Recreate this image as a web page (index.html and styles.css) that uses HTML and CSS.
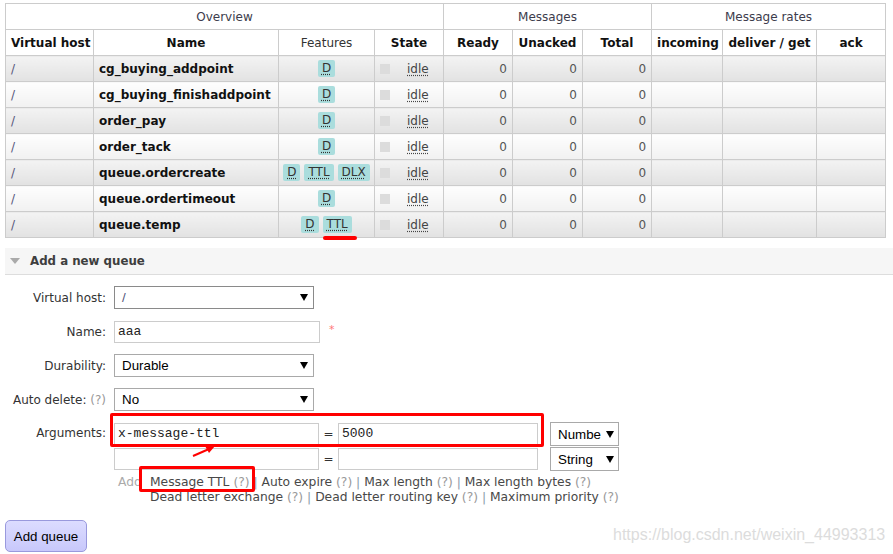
FILE: index.html
```html
<!DOCTYPE html>
<html>
<head>
<meta charset="utf-8">
<link rel="stylesheet" href="styles.css">
</head>
<body>
<div class="page">
  <table class="queues">
    <colgroup>
      <col class="c-vhost"><col class="c-name"><col class="c-feat"><col class="c-state">
      <col class="c-ready"><col class="c-unack"><col class="c-total">
      <col class="c-inc"><col class="c-del"><col class="c-ack">
    </colgroup>
    <thead>
      <tr class="group">
        <th colspan="4">Overview</th>
        <th colspan="3">Messages</th>
        <th colspan="3">Message rates</th>
      </tr>
      <tr class="cols">
        <th>Virtual host</th><th>Name</th><th class="light">Features</th><th>State</th>
        <th>Ready</th><th>Unacked</th><th>Total</th>
        <th>incoming</th><th>deliver / get</th><th>ack</th>
      </tr>
    </thead>
    <tbody>
      <tr class="alt1">
        <td class="vh">/</td><td class="nm">cg_buying_addpoint</td>
        <td class="ft"><span class="badge"><span class="ab">D</span></span></td>
        <td class="st"><span class="box"></span><span class="ab">idle</span></td>
        <td class="num">0</td><td class="num">0</td><td class="num">0</td><td></td><td></td><td></td>
      </tr>
      <tr class="alt2">
        <td class="vh">/</td><td class="nm">cg_buying_finishaddpoint</td>
        <td class="ft"><span class="badge"><span class="ab">D</span></span></td>
        <td class="st"><span class="box"></span><span class="ab">idle</span></td>
        <td class="num">0</td><td class="num">0</td><td class="num">0</td><td></td><td></td><td></td>
      </tr>
      <tr class="alt1">
        <td class="vh">/</td><td class="nm">order_pay</td>
        <td class="ft"><span class="badge"><span class="ab">D</span></span></td>
        <td class="st"><span class="box"></span><span class="ab">idle</span></td>
        <td class="num">0</td><td class="num">0</td><td class="num">0</td><td></td><td></td><td></td>
      </tr>
      <tr class="alt2">
        <td class="vh">/</td><td class="nm">order_tack</td>
        <td class="ft"><span class="badge"><span class="ab">D</span></span></td>
        <td class="st"><span class="box"></span><span class="ab">idle</span></td>
        <td class="num">0</td><td class="num">0</td><td class="num">0</td><td></td><td></td><td></td>
      </tr>
      <tr class="alt1">
        <td class="vh">/</td><td class="nm">queue.ordercreate</td>
        <td class="ft"><span class="badge"><span class="ab">D</span></span><span class="badge"><span class="ab">TTL</span></span><span class="badge"><span class="ab">DLX</span></span></td>
        <td class="st"><span class="box"></span><span class="ab">idle</span></td>
        <td class="num">0</td><td class="num">0</td><td class="num">0</td><td></td><td></td><td></td>
      </tr>
      <tr class="alt2">
        <td class="vh">/</td><td class="nm">queue.ordertimeout</td>
        <td class="ft"><span class="badge"><span class="ab">D</span></span></td>
        <td class="st"><span class="box"></span><span class="ab">idle</span></td>
        <td class="num">0</td><td class="num">0</td><td class="num">0</td><td></td><td></td><td></td>
      </tr>
      <tr class="alt1">
        <td class="vh">/</td><td class="nm">queue.temp</td>
        <td class="ft"><span class="badge"><span class="ab">D</span></span><span class="badge"><span class="ab">TTL</span></span></td>
        <td class="st"><span class="box"></span><span class="ab">idle</span></td>
        <td class="num">0</td><td class="num">0</td><td class="num">0</td><td></td><td></td><td></td>
      </tr>
    </tbody>
  </table>

  <div class="section-head">
    <svg class="tri" width="10" height="6" viewBox="0 0 10 6"><path d="M0 0H10L5 6Z" fill="#aaa"/></svg>
    <span>Add a new queue</span>
  </div>

  <div class="form">
    <div class="row">
      <div class="label">Virtual host:</div>
      <div class="select dark"><span>/</span><svg width="8" height="7" viewBox="0 0 8 7"><path d="M0 0H8L4 7Z" fill="#000"/></svg></div>
    </div>
    <div class="row">
      <div class="label">Name:</div>
      <div class="input wide">aaa</div>
      <span class="req">*</span>
    </div>
    <div class="row">
      <div class="label">Durability:</div>
      <div class="select"><span>Durable</span><svg width="8" height="7" viewBox="0 0 8 7"><path d="M0 0H8L4 7Z" fill="#000"/></svg></div>
    </div>
    <div class="row">
      <div class="label">Auto delete: <span class="help">(?)</span></div>
      <div class="select"><span>No</span><svg width="8" height="7" viewBox="0 0 8 7"><path d="M0 0H8L4 7Z" fill="#000"/></svg></div>
    </div>
    <div class="args">
      <div class="label arglabel">Arguments:</div>
      <div class="argrows">
        <div class="argrow">
          <div class="input key">x-message-ttl</div>
          <span class="eq">=</span>
          <div class="input val">5000</div>
          <div class="select type"><span class="clip">Numbe</span><svg width="8" height="7" viewBox="0 0 8 7"><path d="M0 0H8L4 7Z" fill="#000"/></svg></div>
        </div>
        <div class="argrow">
          <div class="input key"></div>
          <span class="eq">=</span>
          <div class="input val"></div>
          <div class="select type"><span>String</span><svg width="8" height="7" viewBox="0 0 8 7"><path d="M0 0H8L4 7Z" fill="#000"/></svg></div>
        </div>
      </div>
    </div>
    <div class="links">
      <span class="add">Add</span>
      <div class="linklines">
        <div>Message TTL <span class="help">(?)</span> <span class="sep">|</span> Auto expire <span class="help">(?)</span> <span class="sep">|</span> Max length <span class="help">(?)</span> <span class="sep">|</span> Max length bytes <span class="help">(?)</span></div>
        <div>Dead letter exchange <span class="help">(?)</span> <span class="sep">|</span> Dead letter routing key <span class="help">(?)</span> <span class="sep">|</span> Maximum priority <span class="help">(?)</span></div>
      </div>
    </div>
    <button class="btn">Add queue</button>
  </div>

  <div class="mark mark-ttl"></div>
  <div class="mark-box box-args"></div>
  <div class="mark-box box-ttl"></div>
  <svg class="arrow" width="30" height="14" viewBox="0 0 30 14">
    <path d="M2 12 L18 5" stroke="#f00" stroke-width="2" fill="none"/>
    <path d="M14 2 L24 2 L18 9 Z" fill="#f00"/>
  </svg>
  <div class="watermark">https://blog.csdn.net/weixin_44993313</div>
</div>
</body>
</html>
```

FILE: styles.css
```css
html, body {
  margin: 0;
  padding: 0;
  background: #fff;
}
body {
  font-family: "DejaVu Sans", Verdana, sans-serif;
  font-size: 12px;
  color: #484848;
}
.page {
  position: relative;
  width: 893px;
  height: 554px;
  overflow: hidden;
}

/* queue table */
.queues {
  margin: 3px 0 0 5px;
  border-collapse: collapse;
  table-layout: fixed;
  width: 880px;
}
.c-vhost { width: 88px; }
.c-name { width: 185px; }
.c-feat { width: 96px; }
.c-state { width: 69px; }
.c-ready { width: 69px; }
.c-unack { width: 70px; }
.c-total { width: 69px; }
.c-inc { width: 71px; }
.c-del { width: 94px; }
.c-ack { width: 69px; }

.queues th, .queues td {
  border: 1px solid #ccc;
  padding: 0 5px;
  white-space: nowrap;
  overflow: hidden;
}
.queues th {
  background: #fff;
  text-align: center;
  height: 25px;
}
.group th {
  font-weight: normal;
  color: #3c3c4c;
}
.cols th {
  font-weight: bold;
  color: #111;
}
.cols th.light {
  font-weight: normal;
  color: #333;
}
.queues td {
  height: 25px;
}
tr.alt1 td { background: linear-gradient(#f3f3f3, #e2e2e2); }
tr.alt2 td { background: linear-gradient(#fefefe, #f1f1f1); }
td.vh { color: #55557a; }
td.nm { font-weight: bold; color: #111; }
td.ft { text-align: center; padding: 0 2px; }
td.num { text-align: right; color: #555; }
.badge {
  display: inline-block;
  background: #aadddd;
  color: #333;
  border-radius: 2px;
  padding: 0 4px;
  height: 17px;
  line-height: 17px;
  margin: 0 2px;
  vertical-align: middle;
}
.ab {
  text-decoration: underline dotted;
  text-underline-offset: 2px;
}
td.st { color: #444; }
.box {
  display: inline-block;
  width: 10px;
  height: 10px;
  background: #dcdcdc;
  vertical-align: middle;
  margin-right: 17px;
}

/* add section */
.section-head {
  margin: 10px 0 0 5px;
  height: 26px;
  background: #f6f6f6;
  border-bottom: 1px solid #ddd;
  display: flex;
  align-items: center;
  gap: 10px;
  padding-left: 5px;
  font-weight: bold;
  font-size: 11.8px;
  color: #3e3e3e;
}
.form {
  padding: 11px 0 0 5px;
}
.row {
  display: flex;
  align-items: center;
  height: 23px;
  margin-bottom: 11px;
}
.label {
  width: 101px;
  text-align: right;
  margin-right: 8px;
  color: #333;
  white-space: nowrap;
}
.help { color: #999; }
.select {
  box-sizing: border-box;
  width: 200px;
  height: 23px;
  border: 1px solid #a9a9a9;
  background: #fff;
  display: flex;
  align-items: center;
  justify-content: space-between;
  padding: 0 5px 0 7px;
  font-family: "Liberation Sans", Arial, sans-serif;
  font-size: 13.33px;
  color: #000;
}
.select.dark { border-color: #8a8a8a; }
.select.dark span { color: #55557a; }
.input {
  box-sizing: border-box;
  height: 22px;
  border: 1px solid #ccc;
  background: #fff;
  padding: 0 3px;
  line-height: 20px;
  font-family: "Liberation Mono", "Courier New", monospace;
  font-size: 13px;
  color: #222;
}
.input.wide { width: 206px; }
.req {
  color: #f77;
  margin-left: 9px;
  font-size: 11px;
  align-self: flex-start;
  margin-top: 3px;
}
.args {
  display: flex;
  align-items: flex-start;
}
.arglabel {
  line-height: 22px;
}
.argrows {
  display: flex;
  flex-direction: column;
  gap: 1px;
}
.argrow {
  display: flex;
  align-items: center;
  height: 24px;
}
.input.key { width: 205px; }
.input.val { width: 200px; }
.eq {
  width: 19px;
  text-align: center;
  color: #333;
}
.select.type {
  width: 69px;
  height: 24px;
  margin-left: 12px;
  padding: 0 4px 0 7px;
}
.clip {
  width: 46px;
  overflow: hidden;
  white-space: nowrap;
}
.links {
  display: flex;
  margin: 4px 0 0 113px;
  line-height: 15px;
  font-size: 12.3px;
  color: #484848;
}
.add {
  color: #aaa;
  width: 32px;
}
.sep { color: #8899aa; }
.btn {
  display: block;
  margin-top: 15px;
  width: 82px;
  height: 32px;
  border: 1px solid #9999dd;
  border-radius: 5px;
  background: linear-gradient(#dcdcff, #c8c8fb);
  font-family: "Liberation Sans", Arial, sans-serif;
  font-size: 13.33px;
  color: #000;
  padding: 0;
}

/* annotations */
.mark-ttl {
  position: absolute;
  left: 323px;
  top: 236px;
  width: 34px;
  height: 4px;
  background: #f00;
  border-radius: 2px;
}
.mark-box {
  position: absolute;
  border: 3px solid #f00;
  border-radius: 2px;
  box-sizing: border-box;
}
.box-args {
  left: 110px;
  top: 413px;
  width: 434px;
  height: 34px;
}
.box-ttl {
  left: 139px;
  top: 466px;
  width: 116px;
  height: 26px;
}
.arrow {
  position: absolute;
  left: 191px;
  top: 444px;
}
.watermark {
  position: absolute;
  left: 613px;
  top: 526px;
  font-family: "Liberation Sans", Arial, sans-serif;
  font-size: 16px;
  color: #dcdcdc;
  white-space: nowrap;
}
```
